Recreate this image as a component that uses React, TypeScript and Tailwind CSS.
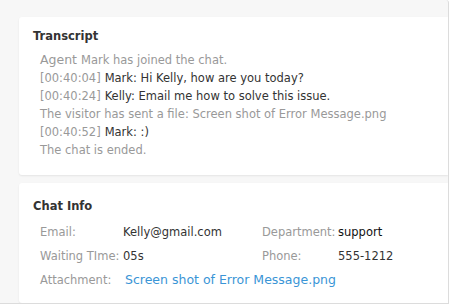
export default function App() {
  const lines: { time?: string; gray?: boolean; agent?: boolean; text: string }[] = [
    { agent: true, gray: true, text: 'Mark has joined the chat.' },
    { time: '[00:40:04]', text: 'Mark: Hi Kelly, how are you today?' },
    { time: '[00:40:24]', text: 'Kelly: Email me how to solve this issue.' },
    { gray: true, text: 'The visitor has sent a file: Screen shot of Error Message.png' },
    { time: '[00:40:52]', text: 'Mark: :)' },
    { gray: true, text: 'The chat is ended.' },
  ];

  return (
    <div
      className="w-[449px] h-[304px] bg-[#f7f7f7] border-r border-b border-[#dcdcdc] rounded-tr-[3px] pl-[19px] pt-[17px] flex flex-col gap-[8px] overflow-hidden"
      style={{ fontFamily: '"DejaVu Sans", Verdana, sans-serif' }}
    >
      <div className="bg-white rounded-l-[3px] h-[158px] shadow-[0_1px_2px_rgba(0,0,0,0.08)] pl-[14px] pt-[11px]">
        <h2 className="text-[11.5px] leading-[16px] font-bold text-[#333]">Transcript</h2>
        <div className="pl-[7px] pt-[7px] text-[11.5px] leading-[18px]">
          {lines.map((l, i) => (
            <div key={i} className={l.gray ? 'text-[#999]' : 'text-[#333]'}>
              {l.agent && <span className="text-[12.5px] text-[#999] mr-[4px]">Agent</span>}
              {l.time && <span className="text-[#999] mr-[4px]">{l.time}</span>}
              {l.text}
            </div>
          ))}
        </div>
      </div>

      <div className="bg-white rounded-l-[3px] flex-1 shadow-[0_1px_2px_rgba(0,0,0,0.08)] pl-[14px] pt-[15px]">
        <h2 className="text-[11.5px] leading-[16px] font-bold text-[#333]">Chat Info</h2>
        <div className="pl-[7px] pt-[10px] text-[11.5px] leading-[16px] grid grid-cols-[83px_139px_76px_1fr] gap-y-[8px]">
          <span className="text-[#999]">Email:</span>
          <span className="text-[#333]">Kelly@gmail.com</span>
          <span className="text-[#999]">Department:</span>
          <span className="text-[#111]">support</span>

          <span className="text-[#999]">Waiting TIme:</span>
          <span className="text-[#333]">05s</span>
          <span className="text-[#999]">Phone:</span>
          <span className="text-[#333]">555-1212</span>

          <span className="text-[#999]">Attachment:</span>
          <span className="col-span-3 text-[#3a95d6] pl-[2px] text-[12.5px]">Screen shot of Error Message.png</span>
        </div>
      </div>
    </div>
  );
}
